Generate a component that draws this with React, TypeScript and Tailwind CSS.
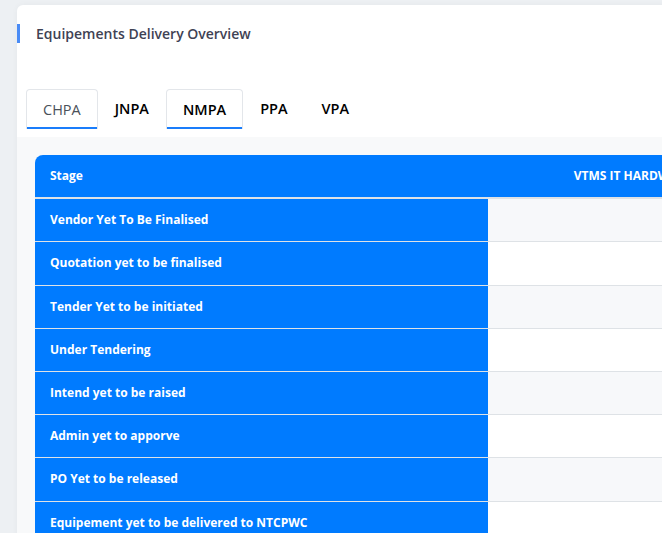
import React from "react";

const ports = ["CHPA", "JNPA", "NMPA", "PPA", "VPA"];

const stages = [
  "Vendor Yet To Be Finalised",
  "Quotation yet to be finalised",
  "Tender Yet to be initiated",
  "Under Tendering",
  "Intend yet to be raised",
  "Admin yet to apporve",
  "PO Yet to be released",
  "Equipement yet to be delivered to NTCPWC",
];

const App = () => {
  return (
    <div className="w-[662px] h-[533px] overflow-hidden bg-[#edf0f3] pt-[5px] pl-[17px] font-['Open_Sans',sans-serif]">
      <div className="w-[900px] min-h-[600px] bg-white rounded-tl-md shadow-[0_0_6px_rgba(0,0,0,0.04)]">
        {/* title */}
        <div className="pt-[19px] flex items-center">
          <div className="w-[3px] h-[19px] bg-[#4a8cf6]" />
          <h2 className="ml-4 text-[14px] font-semibold text-[#3f4254] leading-[19px]">
            Equipements Delivery Overview
          </h2>
        </div>

        {/* tabs */}
        <div className="flex mt-[46px] pl-[9px]">
          {ports.map((p) => {
            const boxed = p === "CHPA" || p === "NMPA";
            return (
              <div
                key={p}
                className={
                  boxed
                    ? "h-[40px] px-4 flex items-center border border-b-0 border-[#e3e6ea] rounded-t-[4px] shadow-[inset_0_-2px_0_#1a7dfb]"
                    : "h-[40px] px-4 flex items-center border border-transparent"
                }
              >
                <span
                  className={
                    p === "CHPA"
                      ? "text-[14.5px] font-medium text-[#4a5059]"
                      : "text-[14.5px] font-semibold text-black"
                  }
                >
                  {p}
                </span>
              </div>
            );
          })}
        </div>

        {/* table area */}
        <div className="mt-[8px] bg-[#f8f9fa] pt-[18px] pl-[18px] h-[500px]">
          <table className="w-[1000px] border-collapse text-[12px] leading-[18.2px] font-bold">
            <thead>
              <tr className="bg-[#007bff] text-white">
                <th className="w-[453px] rounded-tl-lg text-left pl-[15px] py-3 border-b-2 border-[#dee2e6]">
                  Stage
                </th>
                <th className="w-[290px] text-center py-3 border-b-2 border-[#dee2e6]">
                  VTMS IT HARDWARE
                </th>
                <th className="py-3 border-b-2 border-[#dee2e6]"></th>
              </tr>
            </thead>
            <tbody>
              {stages.map((s, i) => (
                <tr
                  key={s}
                  className={i % 2 === 0 ? "bg-[#f7f8fa]" : "bg-white"}
                >
                  <td className="bg-[#007bff] text-white pl-[15px] py-3 border-b border-[#dee2e6]">
                    {s}
                  </td>
                  <td className="py-3 border-b border-[#dee2e6]"></td>
                  <td className="py-3 border-b border-[#dee2e6]"></td>
                </tr>
              ))}
            </tbody>
          </table>
        </div>
      </div>
    </div>
  );
};

export default App;
